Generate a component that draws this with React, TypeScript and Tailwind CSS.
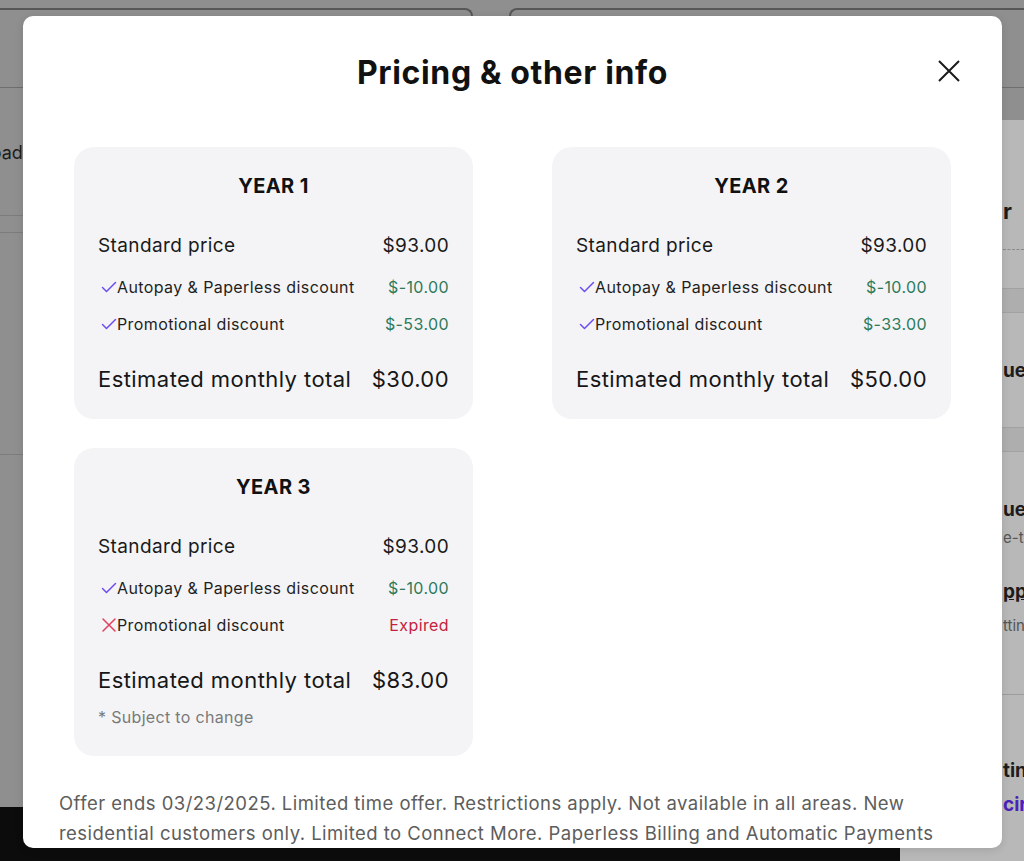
import React from "react";

type Line = {
  label: string;
  value: string;
  ok: boolean;
};

type Year = {
  title: string;
  lines: Line[];
  total: string;
  note?: string;
};

const years: Year[] = [
  {
    title: "YEAR 1",
    lines: [
      { label: "Autopay & Paperless discount", value: "$-10.00", ok: true },
      { label: "Promotional discount", value: "$-53.00", ok: true },
    ],
    total: "$30.00",
  },
  {
    title: "YEAR 2",
    lines: [
      { label: "Autopay & Paperless discount", value: "$-10.00", ok: true },
      { label: "Promotional discount", value: "$-33.00", ok: true },
    ],
    total: "$50.00",
  },
  {
    title: "YEAR 3",
    lines: [
      { label: "Autopay & Paperless discount", value: "$-10.00", ok: true },
      { label: "Promotional discount", value: "Expired", ok: false },
    ],
    total: "$83.00",
    note: "* Subject to change",
  },
];

function Check() {
  return (
    <svg viewBox="0 0 16 16" className="w-[16px] h-[16px] shrink-0" fill="none">
      <path d="M1.5 8.5 L5.5 12.5 L14.5 3.5" stroke="#6b4cf2" strokeWidth="1.5" strokeLinecap="round" strokeLinejoin="round" />
    </svg>
  );
}

function Cross() {
  return (
    <svg viewBox="0 0 16 16" className="w-[16px] h-[16px] shrink-0" fill="none">
      <path d="M2 2 L14 14 M14 2 L2 14" stroke="#e0405e" strokeWidth="1.5" strokeLinecap="round" />
    </svg>
  );
}

function YearCard({ year }: { year: Year }) {
  return (
    <div className={`rounded-[20px] bg-[#f4f4f6] px-6 pt-[25px] ${year.note ? "pb-[28px]" : "pb-[26px]"}`}>
      <h2 className="text-center text-[20px] leading-[28px] font-bold tracking-[0.02em] text-[#111]">{year.title}</h2>
      <div className="mt-[33px] flex justify-between text-[19px] leading-[26px] tracking-[0.02em] text-[#1a1a1a]">
        <span>Standard price</span>
        <span>$93.00</span>
      </div>
      <div className="mt-[17px] flex flex-col gap-[15px]">
        {year.lines.map((line) => (
          <div key={line.label} className="flex items-center justify-between text-[16px] leading-[22px] tracking-[0.025em]">
            <span className="flex items-center text-[#1f1f1f]">
              <span className="ml-[3px]">{line.ok ? <Check /> : <Cross />}</span>
              {line.label}
            </span>
            <span className={line.ok ? "text-[#2e7a5a]" : "text-[#c4203f]"}>{line.value}</span>
          </div>
        ))}
      </div>
      <div className="mt-[30px] flex justify-between text-[22px] leading-[28px] tracking-[0.02em] text-[#161616]">
        <span>Estimated monthly total</span>
        <span>{year.total}</span>
      </div>
      {year.note && (
        <p className="mt-[12px] text-[16px] leading-[22px] tracking-[0.02em] text-[#7a7a7a]">{year.note}</p>
      )}
    </div>
  );
}

function Backdrop() {
  return (
    <div className="flex h-full flex-col text-[#1c1c1c]">
      {/* top strip with the two card edges */}
      <div className="flex h-[88px] shrink-0 gap-[36px] border-b border-[#6e6e6e] pt-[8px]">
        <div className="ml-[-20px] w-[493px] rounded-tr-[8px] border-t-2 border-r-2 border-[#575757]" />
        <div className="flex-1 rounded-tl-[8px] border-t-2 border-l-2 border-[#575757]" />
      </div>
      <div className="flex flex-1">
        <div className="flex flex-1 flex-col">
          <div className="flex h-[127px] items-center pt-[2px] text-[18px]">
            <span className="ml-[-38px]">Upload</span>
          </div>
          <div className="h-[18px] border-t border-b border-[#7c7c7c]" />
          <div className="h-[222px] border-b border-[#7c7c7c]" />
          <div className="flex-1" />
          <div className="h-[54px] bg-[#0c0c0c]" />
        </div>
        <div className="w-[124px] pt-[32px]">
          <div className="flex h-full flex-col overflow-hidden whitespace-nowrap bg-[#b8b8b8] pl-[103px]">
            <div className="mt-[78px] text-[22px] leading-[26px] font-bold">r</div>
            <div className="mt-[25px] border-t border-dashed border-[#8a8a8a]" />
            <div className="mt-[38px] -ml-[103px] h-[25px] border-t border-b border-[#a2a2a2] bg-[#aeaeae]" />
            <div className="mt-[46px] text-[19px] leading-[24px] font-bold">ue</div>
            <div className="mt-[44px] -ml-[103px] h-[25px] border-t border-b border-[#a2a2a2] bg-[#aeaeae]" />
            <div className="mt-[46px] text-[19px] leading-[24px] font-bold">ue</div>
            <div className="mt-[6px] text-[15px] leading-[20px] text-[#555]">e-t</div>
            <div className="mt-[32px] text-[19px] leading-[24px] font-bold underline">pp</div>
            <div className="mt-[12px] text-[15px] leading-[20px] text-[#555]">ttin</div>
            <div className="mt-[58px] -ml-[103px] border-t border-[#9c9c9c]" />
            <div className="mt-[64px] text-[19px] leading-[24px] font-bold">tin</div>
            <div className="mt-[10px] text-[19px] leading-[24px] font-bold text-[#4b22b8]">cir</div>
          </div>
        </div>
      </div>
    </div>
  );
}

export default function App() {
  return (
    <div
      className="relative h-[861px] w-full overflow-hidden bg-[#8f8f8f]"
      style={{ fontFamily: "Inter, 'Noto Sans', sans-serif" }}
    >
      <Backdrop />

      <div className="absolute left-[23px] top-[16px] h-[832px] w-[979px] overflow-hidden rounded-[10px] bg-white shadow-[0_2px_8px_rgba(0,0,0,0.12)]">
        <div className="relative pt-[39px]">
          <h1 className="text-center text-[32px] leading-[36px] font-bold tracking-[0.02em] text-[#111]">
            Pricing &amp; other info
          </h1>
          <button className="absolute right-[42px] top-[44px] text-[#1a1a1a]" aria-label="Close">
            <svg viewBox="0 0 22 22" className="h-[22px] w-[22px]" fill="none">
              <path d="M1 1 L21 21 M21 1 L1 21" stroke="currentColor" strokeWidth="2" />
            </svg>
          </button>
        </div>

        <div className="mt-[56px] grid grid-cols-2 items-start gap-x-[79px] gap-y-[29px] px-[51px]">
          {years.map((y) => (
            <YearCard key={y.title} year={y} />
          ))}
        </div>

        <p className="mt-[32px] px-[36px] text-[18.5px] leading-[30px] tracking-[0.025em] text-[#5d5d5d]">
          Offer ends 03/23/2025. Limited time offer. Restrictions apply. Not available in all areas. New
          residential customers only. Limited to Connect More. Paperless Billing and Automatic Payments
          required. Discounts applied within 1-2 billing cycles. Pricing subject to change.
        </p>
      </div>
    </div>
  );
}
